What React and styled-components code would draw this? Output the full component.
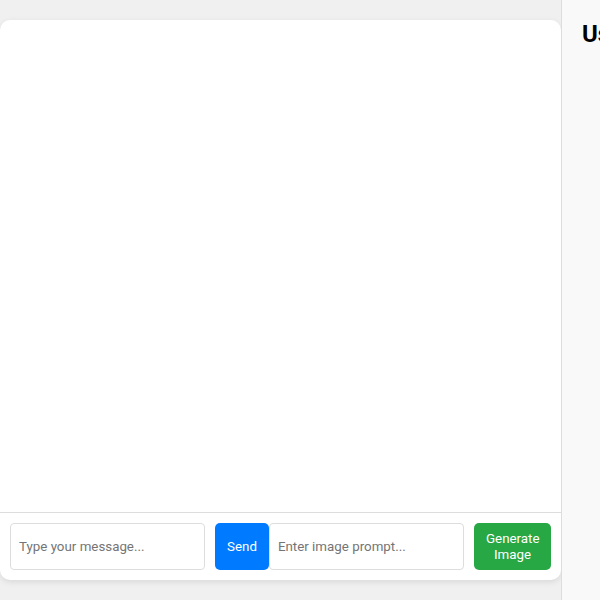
import React, { useState } from 'react';
import styled, { createGlobalStyle } from 'styled-components';

const GlobalStyle = createGlobalStyle`
  html, body {
    margin: 0;
    padding: 0;
    height: 100%;
    overflow: hidden;
    background: #f0f0f0;
    font-family: Roboto, "Liberation Sans", Arial, sans-serif;
  }
  #root { height: 100%; }
`;

const Layout = styled.div`
  display: flex;
  height: 100vh;
`;

const Main = styled.div`
  flex: 1 0 561px;
  display: flex;
  padding: 20px 0;
  box-sizing: border-box;
`;

const ChatCard = styled.div`
  flex: 1;
  display: flex;
  flex-direction: column;
  background: #fff;
  border-radius: 10px;
  box-shadow: 0 2px 6px rgba(0, 0, 0, 0.1);
  overflow: hidden;
`;

const Messages = styled.div`
  flex: 1;
  overflow-y: auto;
  padding: 20px;
`;

const InputRow = styled.div`
  display: flex;
  padding: 10px;
  border-top: 1px solid #ddd;
`;

const Input = styled.input.attrs({ type: 'text' })`
  flex: 1;
  min-width: 0;
  padding: 8px;
  margin-right: 10px;
  border: 1px solid #ddd;
  border-radius: 4px;
  font-family: inherit;
  font-size: 13.333px;
  outline: none;
  &::placeholder { color: #757575; }
`;

const Button = styled.button`
  flex: 0 0 auto;
  width: ${({ $width }) => $width};
  padding: 8px 12px;
  border: none;
  border-radius: 5px;
  background: ${({ $color }) => $color};
  color: #fff;
  font-family: inherit;
  font-size: 13.333px;
  line-height: 1.15;
  cursor: pointer;
  & + ${Input} { margin-left: 0; }
`;

const Sidebar = styled.aside`
  flex: 0 0 250px;
  padding: 20px;
  background: #f9f9f9;
  border-left: 1px solid #ddd;
  box-sizing: border-box;
`;

const SidebarTitle = styled.h2`
  margin: 0;
  font-size: 24px;
  font-weight: bold;
  color: #000;
  white-space: nowrap;
`;

const App = () => {
  const [message, setMessage] = useState('');
  const [prompt, setPrompt] = useState('');

  return (
    <>
      <GlobalStyle />
      <Layout>
        <Main>
          <ChatCard>
            <Messages />
            <InputRow>
              <Input
                placeholder="Type your message..."
                value={message}
                onChange={(e) => setMessage(e.target.value)}
              />
              <Button $color="#007bff">Send</Button>
              <Input
                placeholder="Enter image prompt..."
                value={prompt}
                onChange={(e) => setPrompt(e.target.value)}
              />
              <Button $color="#28a745" $width="77px">Generate Image</Button>
            </InputRow>
          </ChatCard>
        </Main>
        <Sidebar>
          <SidebarTitle>Users</SidebarTitle>
        </Sidebar>
      </Layout>
    </>
  );
};

export default App;
